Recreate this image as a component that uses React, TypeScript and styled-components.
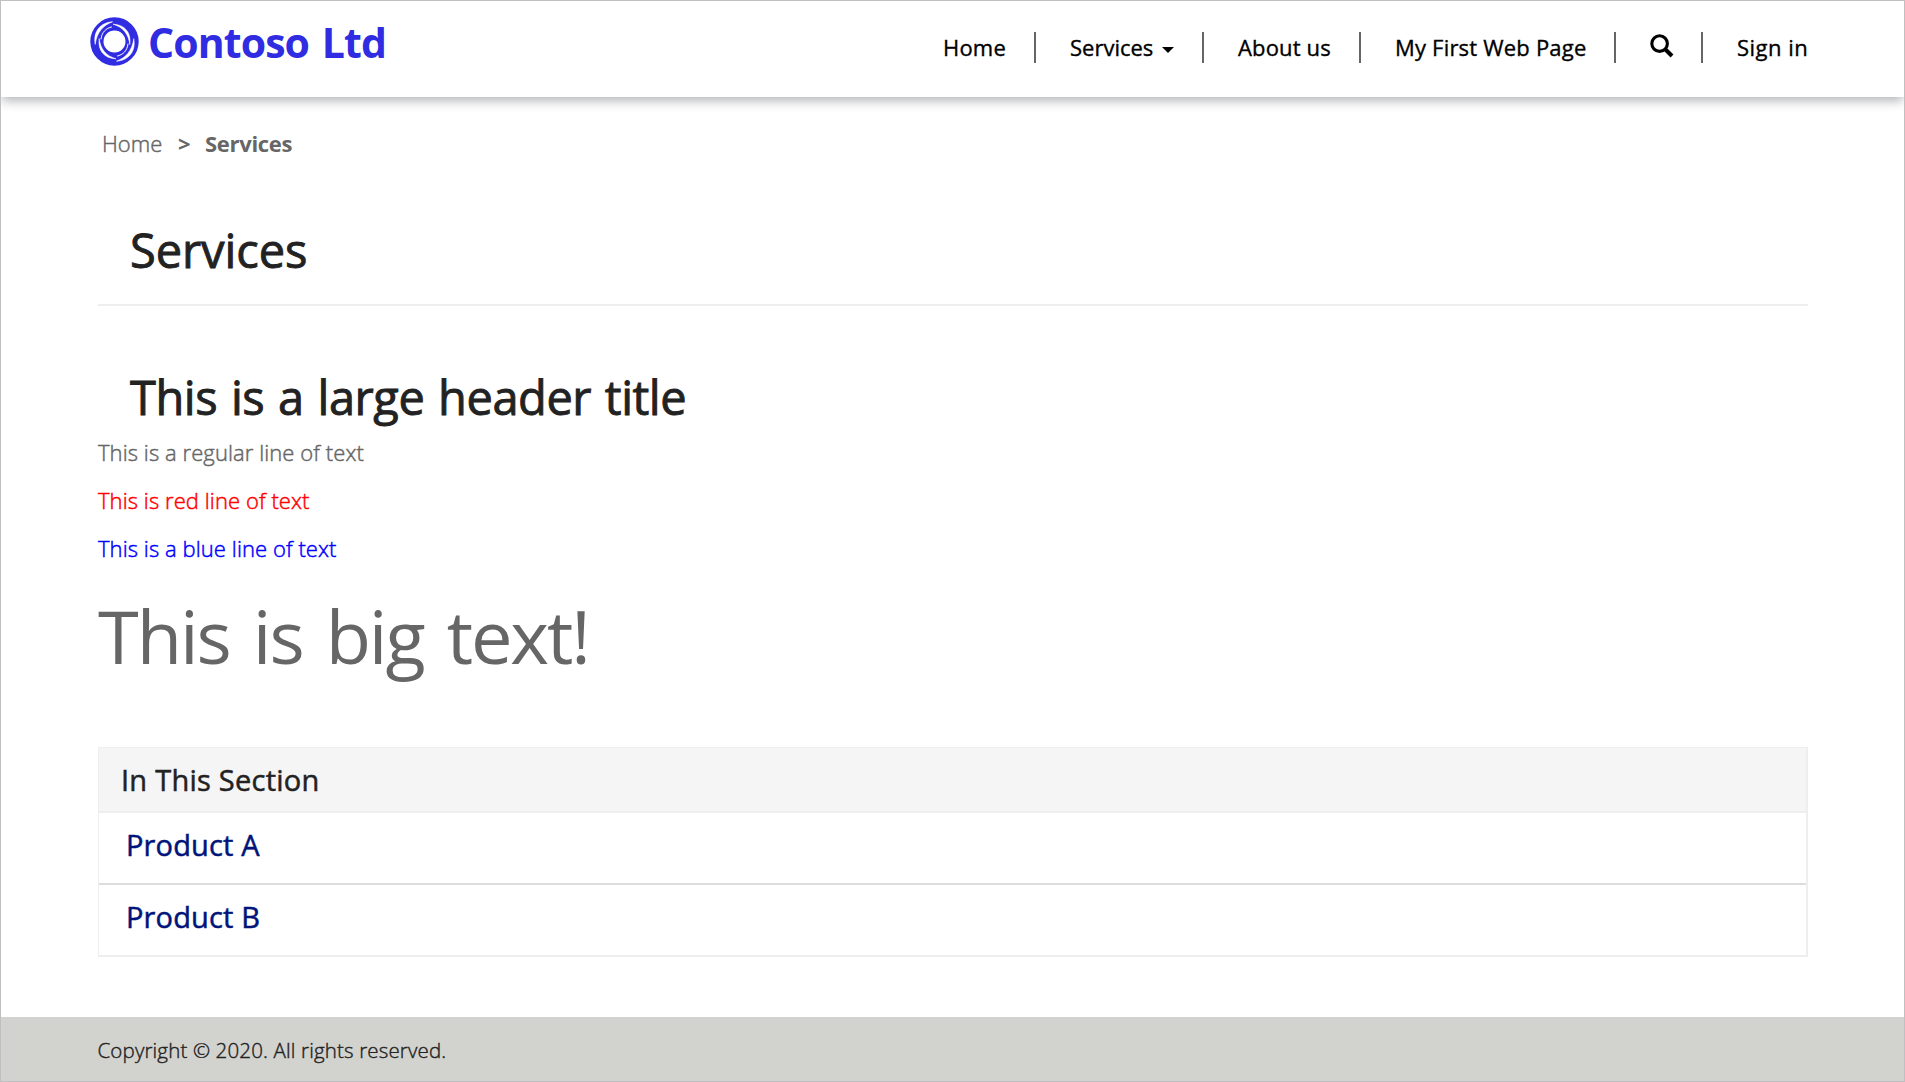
import React from 'react';
import styled, { createGlobalStyle } from 'styled-components';

const GlobalStyle = createGlobalStyle`
  * { box-sizing: border-box; }
  body { margin: 0; background: #fff; }
  h1, h2, h3, p, ul { margin: 0; padding: 0; font-weight: 400; }
  a { color: inherit; text-decoration: none; }
`;

const Page = styled.div`
  width: 1905px;
  height: 1082px;
  border: 1px solid #c0c0c0;
  display: flex;
  flex-direction: column;
  overflow: hidden;
  background: #fff;
  font-family: 'Open Sans', 'Noto Sans', sans-serif;
  font-size: 22px;
  color: #666;
`;

const Header = styled.header`
  height: 96px;
  flex: none;
  display: flex;
  justify-content: space-between;
  padding: 0 96px 0 89px;
  background: #fff;
  box-shadow: 0 5px 10px -1px rgba(50, 54, 62, 0.36);
`;

const Brand = styled.a`
  display: flex;
  align-items: flex-start;
  gap: 9px;
  padding-top: 16px;
  color: #302ce1;
`;

const BrandName = styled.span`
  font-size: 41px;
  line-height: 51px;
  font-weight: 700;
  letter-spacing: -0.9px;
  word-spacing: 3px;
  white-space: nowrap;
`;

const Nav = styled.nav`
  display: flex;
  padding-top: 31px;
`;

const NavItem = styled.a<{ $width: number; $spacing?: number; $last?: boolean }>`
  width: ${p => p.$width}px;
  height: 31px;
  line-height: 31px;
  padding-left: 34px;
  display: flex;
  border-right: ${p => (p.$last ? 'none' : '2px solid #666')};
  color: #000;
  font-weight: 400;
  -webkit-text-stroke: 0.35px currentColor;
  letter-spacing: ${p => p.$spacing ?? 0}px;
  white-space: nowrap;
`;

const Caret = styled.span`
  align-self: flex-start;
  margin: 15px 0 0 9px;
  border-top: 6px solid #000;
  border-left: 6px solid transparent;
  border-right: 6px solid transparent;
`;

const Main = styled.main`
  flex: 1;
  padding: 31px 96px 0 97px;
`;

const Breadcrumb = styled.div`
  display: flex;
  height: 30px;
  line-height: 30px;
  padding-left: 4px;
`;

const Crumb = styled.span<{ $bold?: boolean; $width?: number; $spacing?: number }>`
  width: ${p => (p.$width ? `${p.$width}px` : 'auto')};
  font-weight: ${p => (p.$bold ? 700 : 300)};
  -webkit-text-stroke: ${p => (p.$bold ? 0 : 0.45)}px currentColor;
  letter-spacing: ${p => p.$spacing ?? 0}px;
`;

const Title = styled.h1<{ $top: number; $spacing: number }>`
  margin-top: ${p => p.$top}px;
  padding-left: 32px;
  font-size: 47px;
  line-height: 60px;
  font-weight: 400;
  -webkit-text-stroke: 0.9px currentColor;
  color: #222;
  letter-spacing: ${p => p.$spacing}px;
  word-spacing: 2px;
`;

const Rule = styled.div`
  margin-top: 24px;
  height: 2px;
  background: #eee;
`;

const Line = styled.p<{ $color?: string; $top: number }>`
  margin-top: ${p => p.$top}px;
  line-height: 30px;
  color: ${p => p.$color ?? '#666'};
  font-weight: 300;
  -webkit-text-stroke: 0.45px currentColor;
  letter-spacing: 0.08px;
`;

const BigText = styled.p`
  margin-top: 23px;
  font-size: 74px;
  line-height: 100px;
  letter-spacing: -2.1px;
  word-spacing: 6px;
`;

const Panel = styled.section`
  margin-top: 61px;
  border: solid #eee;
  border-width: 1px 2px 2px 1px;
`;

const PanelHeading = styled.h3`
  height: 65px;
  padding-left: 22px;
  border-bottom: 2px solid #eee;
  background: #f5f5f5;
  color: #222;
  font-size: 29px;
  line-height: 63px;
  font-weight: 400;
  -webkit-text-stroke: 0.5px currentColor;
  letter-spacing: 0.25px;
`;

const PanelLink = styled.a<{ $divided?: boolean }>`
  display: block;
  height: ${p => (p.$divided ? 72 : 70)}px;
  padding-left: 27px;
  border-bottom: ${p => (p.$divided ? '2px solid #ddd' : 'none')};
  color: #00147a;
  font-size: 29px;
  line-height: 63px;
  font-weight: 400;
  -webkit-text-stroke: 0.5px currentColor;
  letter-spacing: 0.15px;
`;

const Footer = styled.footer`
  height: 64px;
  flex: none;
  padding-left: 96.5px;
  background: #d2d3ce;
  color: #222;
  font-size: 20.5px;
  font-weight: 300;
  -webkit-text-stroke: 0.4px currentColor;
  letter-spacing: 0.15px;
  line-height: 67px;
`;

const LogoMark = () => (
  <svg width="49" height="49" viewBox="0 0 49 49" fill="none">
    <circle cx="24.5" cy="24.5" r="17.6" stroke="#302ce1" strokeWidth="13.2" />
    <g fill="#fff" stroke="#fff" strokeLinecap="round" strokeLinejoin="round" strokeWidth="0.6">
      <path d="M5.2 27C2.8 14 11 5.5 22.5 4.8C13.5 8 7 15 5.2 27Z" />
      <path d="M43.8 22C46.2 35 38 43.5 26.5 44.2C35.5 41 42 34 43.8 22Z" />
      <path d="M9.2 22C7.5 33 14 41.5 26 41.8C16 39 10.5 32 9.2 22Z" />
      <path d="M39.8 27C41.5 16 35 7.5 23 7.2C33 10 38.5 17 39.8 27Z" />
    </g>
    <path
      d="M11 22C11.8 15 16 11.3 21.5 10M38 27C37.2 34 33 37.7 27.5 39"
      stroke="#fff"
      strokeWidth="1"
      strokeLinecap="round"
    />
  </svg>
);

const SearchIcon = () => (
  <svg width="24" height="26" viewBox="0 -2 24 26" fill="none" stroke="#000">
    <circle cx="9.6" cy="9.6" r="7.8" strokeWidth="3.1" />
    <path d="M15 15L22 22" strokeWidth="4" />
  </svg>
);

export default function App() {
  return (
    <>
      <GlobalStyle />
      <Page>
        <Header>
          <Brand href="#">
            <LogoMark />
            <BrandName>Contoso Ltd</BrandName>
          </Brand>
          <Nav>
            <NavItem href="#" $width={127} $spacing={0.2}>Home</NavItem>
            <NavItem href="#" $width={168} $spacing={0}>Services<Caret /></NavItem>
            <NavItem href="#" $width={157} $spacing={0.15}>About us</NavItem>
            <NavItem href="#" $width={255} $spacing={0.2}>My First Web Page</NavItem>
            <NavItem href="#" $width={87} aria-label="Search">
              <SearchIcon />
            </NavItem>
            <NavItem href="#" $width={105} $spacing={0.5} $last>Sign in</NavItem>
          </Nav>
        </Header>
        <Main>
          <Breadcrumb>
            <Crumb $width={76}>Home</Crumb>
            <Crumb $bold $width={27}>&gt;</Crumb>
            <Crumb $bold $spacing={-0.3}>Services</Crumb>
          </Breadcrumb>
          <Title $top={62} $spacing={-0.1}>Services</Title>
          <Rule />
          <Title as="h2" $top={61} $spacing={-0.45}>This is a large header title</Title>
          <Line $top={10}>This is a regular line of text</Line>
          <Line $top={18} $color="#f00">This is red line of text</Line>
          <Line $top={18} $color="#00f">This is a blue line of text</Line>
          <BigText>This is big text!</BigText>
          <Panel>
            <PanelHeading>In This Section</PanelHeading>
            <PanelLink href="#" $divided>Product A</PanelLink>
            <PanelLink href="#">Product B</PanelLink>
          </Panel>
        </Main>
        <Footer>Copyright © 2020. All rights reserved.</Footer>
      </Page>
    </>
  );
}
